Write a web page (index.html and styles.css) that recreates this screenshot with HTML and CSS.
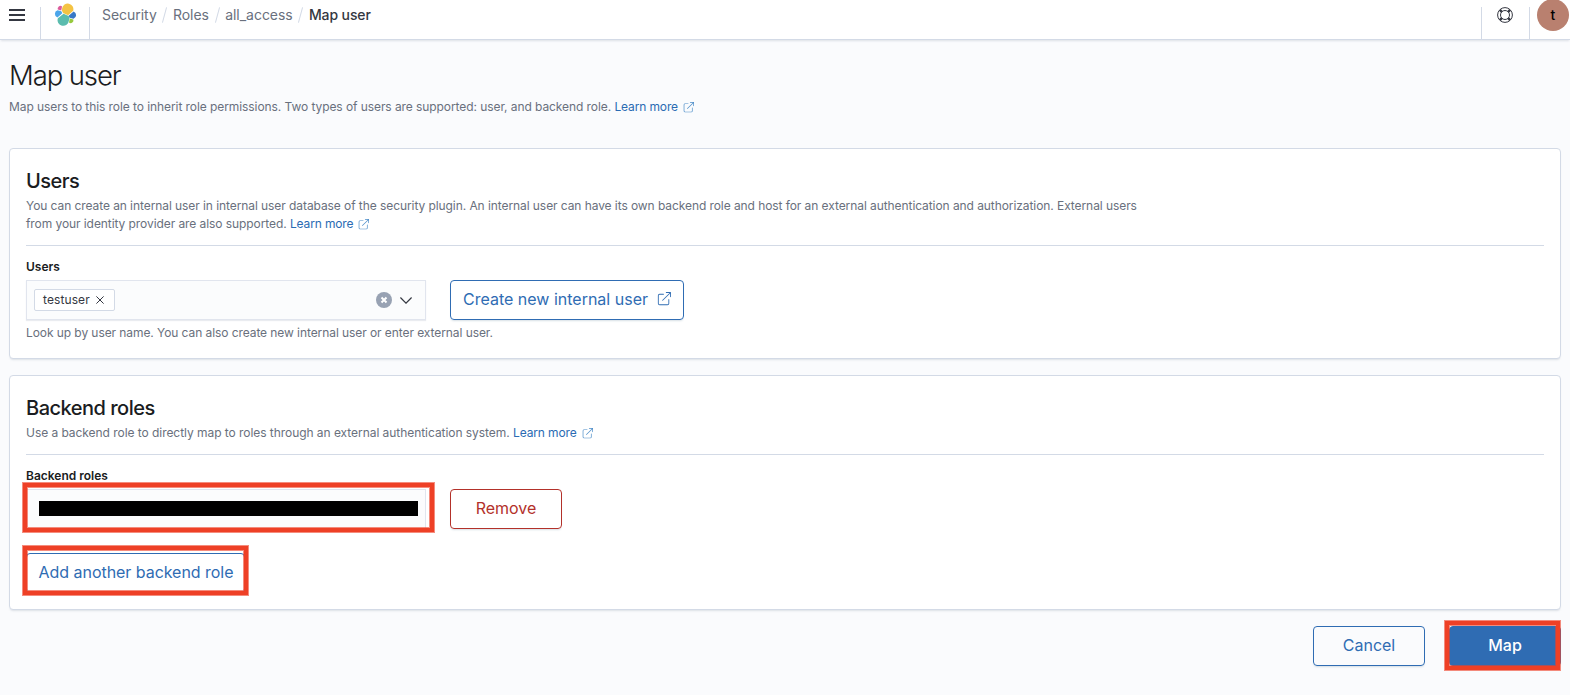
FILE: index.html
```html
<!DOCTYPE html>
<html lang="en">
<head>
  <meta charset="UTF-8">
  <meta name="viewport" content="width=device-width, initial-scale=1.0">
  <title>Map user</title>
  <link rel="stylesheet" href="styles.css">
</head>
<body>
  <!-- Shared icons -->
  <svg class="sprite" xmlns="http://www.w3.org/2000/svg">
    <symbol id="icon-popout" viewBox="0 0 16 16">
      <path d="M13 8.500a.5.5 0 1 1 1 0V13a2 2 0 0 1-2 2H3a2 2 0 0 1-2-2V4a2 2 0 0 1 2-2h4.500a.5.5 0 0 1 0 1H3a1 1 0 0 0-1 1v9a1 1 0 0 0 1 1h9a1 1 0 0 0 1-1V8.500zM14.300 1H10.500a.5.5 0 1 1 0-1h5a.5.5 0 0 1 .5.5v5a.5.5 0 1 1-1 0V1.700L6.850 9.850a.5.5 0 1 1-.7-.7L14.300 1z"/>
    </symbol>
  </svg>

  <header class="header">
    <div class="header-section">
      <button class="menu-toggle" aria-label="Menu">
        <svg width="16" height="12" viewBox="0 0 16 12" fill="#343741"><path d="M0 0h16v2H0zM0 5h16v2H0zM0 10h16v2H0z"/></svg>
      </button>
      <a class="logo" href="#" aria-label="Home">
        <svg width="23" height="23" viewBox="0 0 32 32">
          <path fill="#f4c344" d="M12.600 13.800l7 3.200 7.100-6.200A7.900 7.900 0 1 0 11.300 7.400l-.2 3.300z"/>
          <path fill="#5bbcae" d="M5.400 21.200a7.900 7.900 0 1 0 15.300 3.400l1-3.800-1.300-2.600-7.100-3.300z"/>
          <path fill="#db5b9b" d="M5.300 9.100l4.800 1.200 1.100-5.500A3.800 3.800 0 0 0 5.300 9.100z"/>
          <path fill="#4aa5ea" d="M4.900 10.200a5.300 5.300 0 0 0-.2 10l6.800-6.100-1.300-2.700z"/>
          <path fill="#96c93c" d="M20.900 27.200a3.800 3.800 0 0 0 5.900-4.300L22 21.700z"/>
          <path fill="#3878c7" d="M21.800 20.500l5.300 1.300a5.300 5.300 0 0 0 .2-10l-6.900 6.100z"/>
        </svg>
      </a>
      <nav class="breadcrumbs">
        <a href="#">Security</a>
        <span class="slash"></span>
        <a href="#">Roles</a>
        <span class="slash"></span>
        <a href="#">all_access</a>
        <span class="slash"></span>
        <strong>Map user</strong>
      </nav>
    </div>
    <div class="header-section">
      <button class="help" aria-label="Help">
        <svg width="16" height="16" viewBox="0 0 16 16" fill="none" stroke="#343741">
          <circle cx="8" cy="8" r="7.400"/>
          <circle cx="8" cy="8" r="4.500"/>
          <path stroke-width="2.400" d="M2.900 2.900l1.900 1.900M13.100 2.900l-1.900 1.900M2.900 13.100l1.900-1.900M13.100 13.100l-1.900-1.900"/>
        </svg>
      </button>
      <div class="account"><span class="avatar">t</span></div>
    </div>
  </header>

  <main class="page">
    <h1>Map user</h1>
    <p class="description">Map users to this role to inherit role permissions. Two types of users are supported: user, and backend role. <a href="#">Learn more<svg><use href="#icon-popout"/></svg></a></p>

    <section class="panel users">
      <h2>Users</h2>
      <p class="description">You can create an internal user in internal user database of the security plugin. An internal user can have its own backend role and host for an external authentication and authorization. External users from your identity provider are also supported. <a href="#">Learn more<svg><use href="#icon-popout"/></svg></a></p>
      <hr>
      <label>Users</label>
      <div class="row">
        <div class="combo">
          <span class="pill">testuser
            <svg width="8" height="8" viewBox="0 0 8 8"><path d="M.4.4l7.200 7.200M7.600.4L.4 7.600" stroke="#343741"/></svg>
          </span>
          <span class="combo-icons">
            <svg width="16" height="16" viewBox="0 0 16 16"><circle cx="8" cy="8" r="8" fill="#98a2b3"/><path d="M5.500 5.500l5 5M10.500 5.500l-5 5" stroke="#fff" stroke-width="2"/></svg>
            <svg width="12" height="7" viewBox="0 0 12 7"><path d="M.4.5L6 6.100 11.600.5" fill="none" stroke="#343741" stroke-width="1.200"/></svg>
          </span>
        </div>
        <button class="button create">Create new internal user <svg><use href="#icon-popout"/></svg></button>
      </div>
      <p class="help-text">Look up by user name. You can also create new internal user or enter external user.</p>
    </section>

    <section class="panel roles">
      <h2>Backend roles</h2>
      <p class="description">Use a backend role to directly map to roles through an external authentication system. <a href="#">Learn more<svg><use href="#icon-popout"/></svg></a></p>
      <hr>
      <label>Backend roles</label>
      <div class="row">
        <div class="marked marked-input">
          <div class="role-input"><span class="redacted"></span></div>
        </div>
        <button class="button danger">Remove</button>
      </div>
      <div class="marked marked-add">
        <button class="button add">Add another backend role</button>
      </div>
    </section>

    <div class="actions">
      <button class="button">Cancel</button>
      <div class="marked marked-map">
        <button class="button primary">Map</button>
      </div>
    </div>
  </main>
</body>
</html>
```
FILE: styles.css
```css
* {
  box-sizing: border-box;
}

body {
  margin: 0;
  height: 695px;
  overflow: hidden;
  background: #fafbfd;
  color: #343741;
  font-family: Inter, "Liberation Sans", sans-serif;
  font-size: 12px;
  line-height: 18px;
}

h1, h2, p {
  margin: 0;
}

button {
  font-family: inherit;
  background: none;
  border: 0;
  padding: 0;
}

a {
  color: #2a6bb3;
  text-decoration: none;
}

.sprite {
  display: none;
}

/* Header */
.header {
  display: flex;
  justify-content: space-between;
  height: 40px;
  background: #fff;
  border-bottom: 1px solid #d3dae6;
  box-shadow: 0 2px 2px -1px rgba(152, 162, 179, 0.3);
}

.header-section {
  display: flex;
  align-items: flex-end;
}

.menu-toggle,
.logo,
.help,
.account {
  display: flex;
  justify-content: center;
  height: 32px;
}

.menu-toggle {
  width: 40px;
  padding: 2px 6px 0 0;
}

.logo {
  width: 50px;
  border-left: 1px solid #d3dae6;
  border-right: 1px solid #d3dae6;
}

.logo svg {
  margin-top: -4px;
}

.breadcrumbs {
  display: flex;
  align-items: center;
  height: 32px;
  padding: 0 0 16px 12px;
  font-size: 14px;
  letter-spacing: -0.03px;
}

.breadcrumbs a {
  color: #69707d;
}

.breadcrumbs strong {
  font-weight: 500;
  letter-spacing: -0.1px;
}

.slash {
  width: 1px;
  height: 16px;
  margin: 0 7.6px;
  background: #d3dae6;
  transform: rotate(15deg);
}

.help {
  width: 48px;
  padding-right: 2px;
  border-left: 1px solid #d3dae6;
}

.account {
  width: 41px;
  border-left: 1px solid #d3dae6;
}

.avatar {
  width: 32px;
  height: 32px;
  margin: -8px 0 0 6px;
  border-radius: 50%;
  background: #b9806f;
  color: #000;
  font-size: 14px;
  font-weight: 500;
  line-height: 32px;
  text-align: center;
}

/* Page */
.page {
  padding: 18px 9px 0;
}

h1 {
  color: #1a1c21;
  font-size: 27.500px;
  font-weight: 300;
  letter-spacing: -0.04em;
  line-height: 34px;
}

h2 {
  color: #1a1c21;
  font-size: 20px;
  font-weight: 500;
  letter-spacing: -0.025em;
  line-height: 24px;
}

.description {
  color: #69707d;
  letter-spacing: -0.075px;
}

.page > .description {
  margin-top: 6px;
}

.description a {
  letter-spacing: -0.13px;
  white-space: nowrap;
}

.description svg {
  width: 11px;
  height: 11px;
  margin-left: 5px;
  vertical-align: -2px;
  fill: #4b8cc8;
}

.panel {
  background: #fff;
  border: 1px solid #d3dae6;
  border-radius: 4px;
  box-shadow: 0 2px 2px -1px rgba(152, 162, 179, 0.3);
  padding: 20px 16px 0;
}

.panel .description {
  max-width: 1122px;
  margin-top: 4px;
}

.users {
  height: 211px;
  margin-top: 32px;
}

.roles {
  height: 235px;
  margin-top: 16px;
}

.roles .description {
  letter-spacing: -0.05px;
}

hr {
  height: 1px;
  margin: 12px 0;
  border: 0;
  background: #d3dae6;
}

label {
  display: block;
  color: #1a1c21;
  font-weight: 600;
}

.row {
  display: flex;
  gap: 24px;
  margin-top: 4px;
}

.combo,
.role-input {
  display: flex;
  align-items: center;
  width: 400px;
  height: 40px;
  background: #fbfcfd;
  border: 1px solid #e1e5ee;
}

.combo {
  justify-content: space-between;
  padding: 0 13px 0 7px;
  box-shadow: 0 1px 1px rgba(152, 162, 179, 0.2);
}

.pill {
  display: flex;
  align-items: center;
  gap: 6px;
  height: 22px;
  padding: 0 10px 0 8px;
  background: #fff;
  border: 1px solid #d3dae6;
  border-radius: 2px;
  letter-spacing: 0.1px;
}

.combo-icons {
  display: flex;
  align-items: center;
  gap: 8px;
}

.button {
  display: flex;
  align-items: center;
  justify-content: center;
  width: 112px;
  height: 40px;
  padding-bottom: 2px;
  border: 1px solid #2f6cb3;
  border-radius: 4px;
  color: #2f6cb3;
  font-size: 16px;
  box-shadow: 0 2px 2px -1px rgba(54, 97, 126, 0.2);
}

.create {
  width: 234px;
  gap: 9px;
}

.create svg {
  width: 14px;
  height: 14px;
  fill: #2f6cb3;
}

.danger {
  border-color: #b3312a;
  color: #b3312a;
}

.add {
  width: 219px;
  padding-left: 1px;
  letter-spacing: -0.04px;
}

.primary {
  background: #2f6cb3;
  color: #fff;
  font-weight: 500;
}

.help-text {
  margin-top: 4px;
  color: #69707d;
  letter-spacing: -0.075px;
}

/* Red outlines around the controls */
.marked {
  position: relative;
}

.marked::after {
  content: "";
  position: absolute;
  inset: -6px -8px -3px -3px;
  border: 4px solid #ee4026;
  box-shadow: 0 0 0 1px rgba(238, 64, 38, 0.6), inset 0 0 0 1px rgba(238, 64, 38, 0.6);
}

.redacted {
  width: 379px;
  height: 15px;
  margin: 0 0 2px 12px;
  background: #000;
}

.marked-add {
  width: 219px;
  margin-top: 24px;
}

.marked-add::after {
  inset: -7px -3px -2px -3px;
}

.actions {
  display: flex;
  justify-content: flex-end;
  gap: 24px;
  margin-top: 16px;
}

.marked-map::after {
  inset: -5px 1px -4px -4px;
}
```
